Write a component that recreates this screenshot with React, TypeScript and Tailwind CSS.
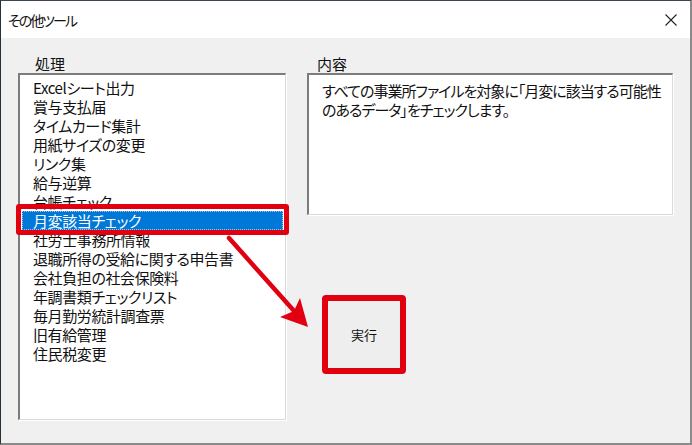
const items = [
  'Excelシート出力',
  '賞与支払届',
  'タイムカード集計',
  '用紙サイズの変更',
  'リンク集',
  '給与逆算',
  '台帳チェック',
  '月変該当チェック',
  '社労士事務所情報',
  '退職所得の受給に関する申告書',
  '会社負担の社会保険料',
  '年調書類チェックリスト',
  '毎月勤労統計調査票',
  '旧有給管理',
  '住民税変更',
]

const selected = 7

export default function App() {
  return (
    <div className="relative w-[692px] h-[445px] flex flex-col bg-[#f0f0f0] border-t border-l border-r-2 border-b-2 border-t-[#3c4650] border-l-[#24323c] border-r-[#8a8a8a] border-b-[#8a8a8a] font-['Noto_Sans_CJK_JP',sans-serif] [font-feature-settings:'palt'] text-[#111]">
      {/* Title bar */}
      <div className="h-[37px] shrink-0 bg-white flex items-center justify-between pl-[7px] pr-[13px]">
        <span className="text-[14px] leading-none tracking-[-2px]">その他ツール</span>
        <svg width="12" height="12" viewBox="0 0 12 12" className="text-[#222]">
          <path d="M0.5 0.5 L11.5 11.5 M11.5 0.5 L0.5 11.5" stroke="currentColor" strokeWidth="1.1" fill="none" />
        </svg>
      </div>

      {/* Body */}
      <div className="flex pl-[17px] gap-[21px]">
        {/* 処理 */}
        <div className="w-[268px] flex flex-col">
          <div className="mt-[17px] h-[18px] leading-[18px] pl-[17px] text-[15px]">処理</div>
          <div className="relative h-[347px] bg-white border-t-2 border-l-2 border-r border-b border-t-[#7c7c7c] border-l-[#7c7c7c] border-r-[#dadada] border-b-[#dadada] shadow-[1px_1px_0_#ffffff] pt-[3px]">
            {items.map((item, i) => (
              <div
                key={item}
                className={
                  i === selected
                    ? 'relative mx-[2px] h-[19px] leading-[19px] pl-[11px] text-[15px] tracking-[-0.4px] whitespace-nowrap bg-[#0078d7] text-white outline outline-1 outline-dotted outline-[#9cc8ee] -outline-offset-1'
                    : 'relative mx-[2px] h-[19px] leading-[19px] pl-[11px] text-[15px] tracking-[-0.4px] whitespace-nowrap'
                }
              >
                {item}
                {i === selected && (
                  <div className="absolute -top-[7px] -bottom-[5px] -left-[6px] -right-[6px] z-10 border-[5px] border-[#e00010] rounded-[3px]" />
                )}
              </div>
            ))}
          </div>
        </div>

        {/* 内容 */}
        <div className="w-[366px] flex flex-col">
          <div className="mt-[17px] h-[18px] leading-[18px] pl-[10px] text-[15px]">内容</div>
          <div className="h-[142px] bg-white border-t-2 border-l-2 border-r border-b border-t-[#7c7c7c] border-l-[#7c7c7c] border-r-[#dadada] border-b-[#dadada] shadow-[1px_1px_0_#ffffff] pt-[6px] pl-[13px] text-[15px] leading-[19px] tracking-[-1px] whitespace-nowrap">
            すべての事業所ファイルを対象に「月変に該当する可能性
            <br />
            のあるデータ」をチェックします。
          </div>

          <div className="mt-[80px] ml-[15px] w-[84px] h-[79px] border-[6px] border-[#e00010] rounded-[4px] bg-[#eeeeee] flex items-center justify-center">
            <span className="text-[13px] [font-feature-settings:normal]">実行</span>
          </div>
        </div>
      </div>

      {/* annotation arrow */}
      <svg
        className="absolute -left-px -top-px pointer-events-none"
        width="692"
        height="445"
        viewBox="0 0 692 445"
      >
        <line x1="229" y1="238" x2="295" y2="312" stroke="#e00010" strokeWidth="4.5" strokeLinecap="round" />
        <polygon points="308,327 300,298 294,311 280,317" fill="#e00010" />
      </svg>
    </div>
  )
}
